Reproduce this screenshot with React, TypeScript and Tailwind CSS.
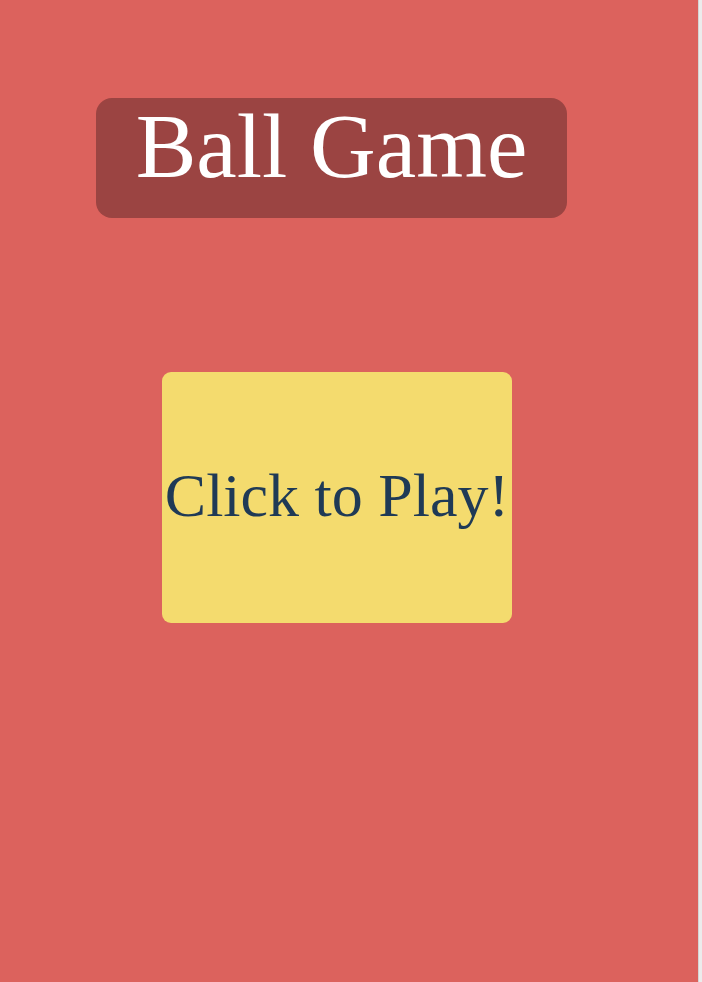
import React from 'react';

const App: React.FC = () => {
  return (
    <div className="flex h-[982px] w-[702px] overflow-hidden">
      <main className="flex-grow bg-[#dc625d] pt-[98px]" style={{ fontFamily: '"Liberation Serif", serif' }}>
        {/* Titre */}
        <div className="ml-[96px] flex h-[120px] w-[471px] items-center justify-center rounded-[16px] bg-[#9b4442] pb-[24px]">
          <h1 className="text-[91px] leading-none text-white">Ball Game</h1>
        </div>

        {/* Bouton jouer */}
        <button className="ml-[162px] mt-[154px] flex h-[251px] w-[350px] items-center justify-center rounded-[9px] bg-[#f4db6e] pb-[6px] text-[62px] leading-none text-[#1f3a56]">
          Click to Play!
        </button>
      </main>
      <div className="w-[4px] border-l border-[#d4d4d4] bg-[#ececec]" />
    </div>
  );
};

export default App;
